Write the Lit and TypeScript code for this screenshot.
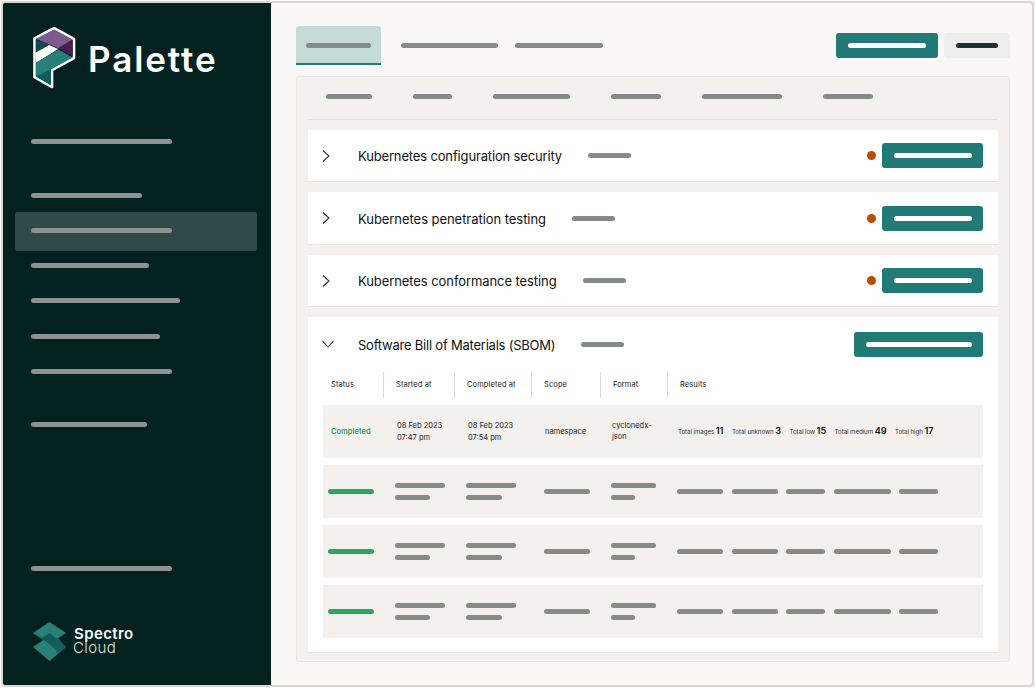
import { LitElement, html, css, svg } from "lit";
import { customElement } from "lit/decorators.js";

const navRows: [number, boolean][] = [
  [111, false],
  [141, true],
  [118, false],
  [149, false],
  [129, false],
  [141, false],
];

const logo = svg`<svg class="p-logo" viewBox="0 0 44 62" width="44" height="62">
  <path d="M2.5 11.5 L22 1 L42 12 L42 31 L20 43 L20 60 L2.5 50 Z" fill="#03211f" stroke="#fff" stroke-width="2.6" stroke-linejoin="round"/>
  <polygon points="3.8,11.8 22,2.5 40.7,12.5 26.3,21.3" fill="#7f5a8f"/>
  <polygon points="40.7,13 40.7,29.6 26.3,21.3" fill="#4a1d52"/>
  <polygon points="3.8,12.5 3.8,25.5 16.5,17" fill="#0f4a48"/>
  <polygon points="3.8,25.5 17,18 26.3,22 3.8,36" fill="#fff"/>
  <polygon points="3.8,36 26.3,22.5 40.7,30.4 18.7,42.5 18.7,58 3.8,49.5" fill="#26807a"/>
  <polygon points="3.8,49.5 18.7,42.5 18.7,58" fill="#0f5b58"/>
</svg>`;

const spectro = svg`<svg class="s-logo" viewBox="0 0 34 40" width="34" height="40">
  <polygon points="0,25 16.5,14 33,25 16.5,39" fill="#2a8079"/>
  <polygon points="0,11 16.5,0 33,11 16.5,22" fill="#2a8079"/>
  <polygon points="8,16.3 16.5,11 27,19 16.5,22" fill="#0f5b58"/>
  <polygon points="16.5,22 25,16 33,25 25,31" fill="#135f5b"/>
</svg>`;

const chevronRight = svg`<svg class="chev" viewBox="0 0 10 14" width="10" height="14"><path d="M2 1.5 L8 7 L2 12.5" fill="none" stroke="#333" stroke-width="1.1"/></svg>`;
const chevronDown = svg`<svg class="chev wide" viewBox="0 0 14 10" width="14" height="10"><path d="M1.5 2 L7 8 L12.5 2" fill="none" stroke="#333" stroke-width="1.1"/></svg>`;

const topTabs = [46, 39, 77, 50, 80, 50];

const collapsed: [string, number, number][] = [
  ["Kubernetes configuration security", 43, -0.15],
  ["Kubernetes penetration testing", 43, -0.05],
  ["Kubernetes conformance testing", 43, -0.08],
];

const headers = ["Status", "Started at", "Completed at", "Scope", "Format", "Results"];
const results: [string, string][] = [
  ["Total images", "11"],
  ["Total unknown", "3"],
  ["Total low", "15"],
  ["Total medium", "49"],
  ["Total high", "17"],
];

@customElement("app-root")
export class AppRoot extends LitElement {
  static styles = css`
    :host { display: block; width: 1035px; height: 688px; background: #fbfaf8; font-family: "Inter", "Liberation Sans", sans-serif; color: #111; }
    .frame { box-sizing: border-box; width: 1035px; height: 688px; padding: 1px; }
    .inner { box-sizing: border-box; width: 100%; height: 100%; display: flex; border: 2px solid #d9d5cf; border-radius: 4px; background: #faf8f6; overflow: hidden; }
    .bar { display: block; height: 5px; border-radius: 3px; background: #858a8a; flex: none; }
    .side { width: 268px; flex: none; background: #03211f; display: flex; flex-direction: column; box-sizing: border-box; padding: 24px 0 0 0; }
    .brand { display: flex; align-items: flex-start; padding-left: 29px; height: 62px; gap: 12px; }
    .brand span { font-weight: 600; font-size: 35px; color: #fff; line-height: 1; margin-top: 15px; letter-spacing: 1.9px; }
    .nav { display: flex; flex-direction: column; padding-left: 28px; }
    .nav .bar { background: #8d9291; }
    .nav-first { margin-top: 50px; }
    .nav-group { margin-top: 49px; display: flex; flex-direction: column; gap: 30.15px; }
    .nav-sel { position: relative; }
    .nav-sel::before { content: ""; position: absolute; left: -16px; top: -16px; width: 242px; height: 39px; background: #2f4a48; border-radius: 2px; }
    .nav-sel .bar { position: relative; }
    .nav-after { margin-top: 48px; }
    .nav-bottom { margin-top: 139px; }
    .foot { display: flex; align-items: flex-start; margin-top: 51px; padding-left: 30px; gap: 7px; color: #fff; }
    .foot-text { display: flex; flex-direction: column; font-size: 15px; line-height: 14.5px; padding-top: 5px; }
    .foot-text b { font-weight: 600; letter-spacing: 0.4px; }
    .foot-text i { font-style: normal; font-weight: 300; margin-left: -1px; color: #d9e3e1; letter-spacing: 0.4px; }
    .main { flex: 1; min-width: 0; padding: 23px 22px 0 25px; display: flex; flex-direction: column; }
    .topbar { display: flex; align-items: flex-start; height: 50px; flex: none; }
    .tab { width: 85px; height: 39px; box-sizing: border-box; background: #c5dbd8; border-bottom: 2px solid #1f7a78; border-radius: 3px 3px 0 0; display: flex; align-items: center; padding: 1px 0 0 10px; }
    .tab .bar { background: #858a8a; }
    .plain { display: flex; height: 39px; align-items: center; margin-left: 20px; gap: 17px; }
    .spacer { flex: 1; }
    .btns { display: flex; gap: 6px; margin-top: 7px; }
    .btn { height: 25px; box-sizing: border-box; border-radius: 3px; background: #217a76; display: flex; align-items: center; padding: 0 12px; }
    .btn .bar { background: #fff; }
    .btn.alt { background: #ededed; }
    .btn.alt .bar { background: #1f3331; }
    .row .btn { padding-right: 11px; }
    .panel { box-sizing: border-box; height: 586px; background: #f3f0ed; border: 1px solid #e9e5e1; border-radius: 3px; padding: 0 11px; }
    .subtabs { display: flex; height: 43px; box-sizing: border-box; border-bottom: 1px solid #e3dfda; padding: 17px 0 0 18px; gap: 41px; align-items: flex-start; margin-bottom: 10px; }
    .card { background: #fff; border-bottom: 1px solid #e9e5e1; box-sizing: border-box; margin-bottom: 10px; }
    .row { height: 51.33px; box-sizing: border-box; display: flex; align-items: center; padding: 0.5px 15px 0 13px; }
    .row.tall { height: 55px; padding-top: 0; }
    .chev { flex: none; width: 10px; margin-right: 27px; }
    .chev.wide { width: 14px; margin-right: 23px; }
    .title { font-size: 13px; font-weight: 400; margin: 1px 26px 0 0; white-space: nowrap; }
    .dot { width: 9px; height: 9px; border-radius: 50%; background: #bb4d00; margin-right: 6.5px; }
    .table { margin: 0 15px; display: flex; flex-direction: column; gap: 7px; padding-bottom: 14px; }
    .thead, .tr { display: grid; grid-template-columns: 60px 71px 77px 69px 67px 1fr; }
    .thead { height: 26px; align-items: stretch; }
    .th { font-size: 7.5px; display: flex; align-items: center; border-left: 1px solid #dfdad5; padding: 0 0 0 12px; color: #222; letter-spacing: 0.1px; }
    .th:first-child { border-left: 0; padding-left: 8px; }
    .tr { height: 53px; background: #f3f0ed; align-items: center; }
    .cell { display: flex; flex-direction: column; gap: 7px; font-size: 7.5px; line-height: 12px; color: #222; padding-left: 12px; }
    .cell:first-child { padding-left: 5px; }
    .cell.scope { padding-left: 13px; }
    .cell.format { padding-left: 11px; }
    .cell.txt { gap: 0; padding-left: 14px; padding-top: 1.5px; }
    .cell.txt:first-child { padding-left: 8px; }
    .cell.fmt { padding-left: 12px; padding-top: 0; line-height: 11px; }
    .done { color: #2fa65f; font-weight: 600; }
    .res { display: flex; gap: 8.5px; align-items: center; padding-left: 10px; flex-direction: row; }
    .cell.res.txt { padding: 0 0 0 11px; gap: 8.5px; white-space: nowrap; }
    .res-item { font-size: 6.2px; color: #333; letter-spacing: -0.08px; }
    .res-item b { font-size: 9.2px; font-weight: 600; color: #111; }
    .green { background: #2fa65f; }
  `;

  private barRow() {
    return html`<div class="tr">
      <div class="cell"><span class="bar green" style="width:46px"></span></div>
      <div class="cell"><span class="bar" style="width:50px"></span><span class="bar" style="width:35px"></span></div>
      <div class="cell"><span class="bar" style="width:50px"></span><span class="bar" style="width:36px"></span></div>
      <div class="cell scope"><span class="bar" style="width:46px"></span></div>
      <div class="cell format"><span class="bar" style="width:45px"></span><span class="bar" style="width:24px"></span></div>
      <div class="cell res">
        ${[46, 46, 39, 57, 39].map((w) => html`<span class="bar" style="width:${w}px"></span>`)}
      </div>
    </div>`;
  }

  render() {
    return html`<div class="frame"><div class="inner">
      <aside class="side">
        <div class="brand">${logo}<span>Palette</span></div>
        <div class="nav">
          <div class="nav-first"><span class="bar" style="width:141px;"></span></div>
          <div class="nav-group">
            ${navRows.map(([w, sel]) => html`<div class=${sel ? "nav-sel" : ""}><span class="bar" style="width:${w}px"></span></div>`)}
          </div>
          <div class="nav-after"><span class="bar" style="width:116px"></span></div>
          <div class="nav-bottom"><span class="bar" style="width:141px"></span></div>
        </div>
        <div class="foot">${spectro}<div class="foot-text"><b>Spectro</b><i>Cloud</i></div></div>
      </aside>
      <main class="main">
        <div class="topbar">
          <div class="tab"><span class="bar" style="width:65px"></span></div>
          <div class="plain"><span class="bar" style="width:97px"></span><span class="bar" style="width:88px"></span></div>
          <div class="spacer"></div>
          <div class="btns">
            <div class="btn"><span class="bar" style="width:78px"></span></div>
            <div class="btn alt"><span class="bar" style="width:42px"></span></div>
          </div>
        </div>
        <section class="panel">
          <div class="subtabs">${topTabs.map((w) => html`<span class="bar" style="width:${w}px"></span>`)}</div>
          ${collapsed.map(([t, w, ls]) => html`<div class="card"><div class="row">
            ${chevronRight}<span class="title" style="letter-spacing:${ls}px">${t}</span><span class="bar" style="width:${w}px"></span>
            <div class="spacer"></div><span class="dot"></span>
            <div class="btn"><span class="bar" style="width:78px"></span></div>
          </div></div>`)}
          <div class="card">
            <div class="row tall">
              ${chevronDown}<span class="title" style="letter-spacing:-0.22px">Software Bill of Materials (SBOM)</span><span class="bar" style="width:43px"></span>
              <div class="spacer"></div>
              <div class="btn"><span class="bar" style="width:106px"></span></div>
            </div>
            <div class="table">
              <div class="thead">${headers.map((h) => html`<div class="th">${h}</div>`)}</div>
              <div class="tr">
                <div class="cell txt done">Completed</div>
                <div class="cell txt"><span>08 Feb 2023</span><span>07:47 pm</span></div>
                <div class="cell txt"><span>08 Feb 2023</span><span>07:54 pm</span></div>
                <div class="cell txt"><span>namespace</span></div>
                <div class="cell txt fmt"><span>cyclonedx-</span><span>json</span></div>
                <div class="cell res txt">${results.map(([k, v]) => html`<span class="res-item">${k} <b>${v}</b></span>`)}</div>
              </div>
              ${this.barRow()}${this.barRow()}${this.barRow()}
            </div>
          </div>
        </section>
      </main>
    </div></div>`;
  }
}
